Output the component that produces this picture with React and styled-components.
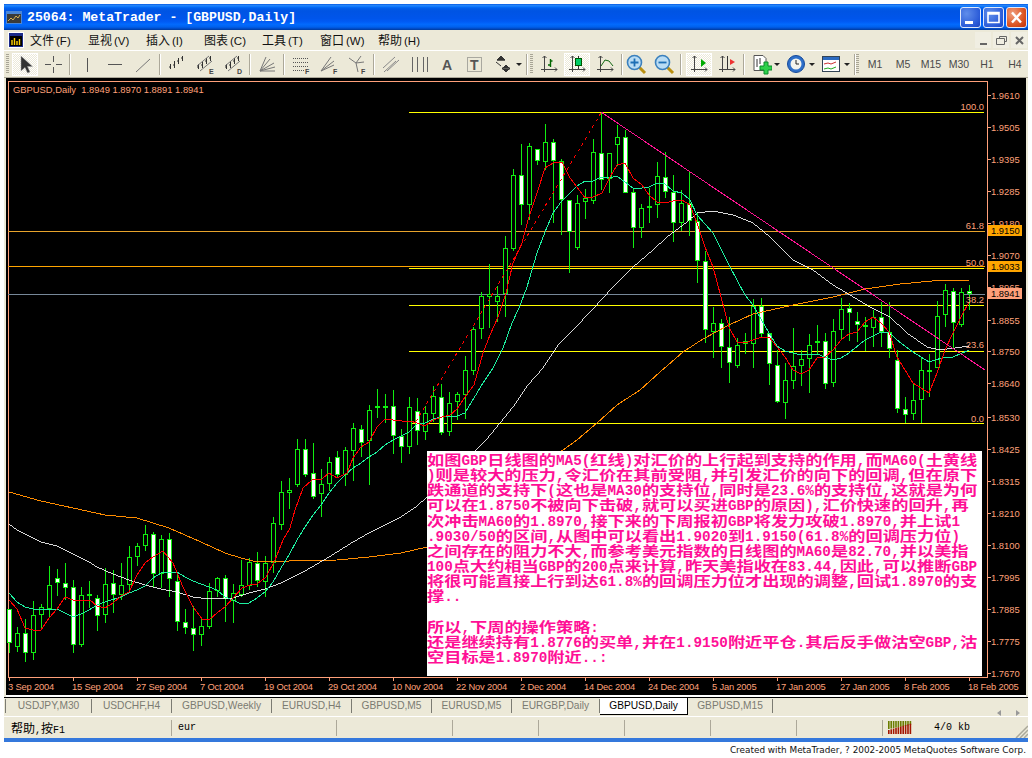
import styled, { createGlobalStyle } from "styled-components";

const GlobalStyle = createGlobalStyle`
  html, body {
    margin: 0;
    padding: 0;
    background: #fff;
    overflow: hidden;
  }
`;

/* ================= CHART DATA ================= */

// [bodyTop, bodyBottom, wickTop, wickBottom, whiteFill] - one every 8px from x=9.5
const CANDLES = [
  [609,643,609,653,1],[633,647,627,652,0],[633,653,619,662,1],[615,653,601,660,0],[607,615,604,630,0],
  [585,609,566,618,0],[578,583,569,596,1],[583,588,563,600,1],[587,645,580,653,1],[595,645,587,647,0],
  [594,595,581,608,0],[598,616,595,631,1],[584,615,568,623,0],[583,595,570,613,1],[585,595,563,600,0],
  [557,585,546,593,0],[546,557,543,566,0],[534,546,525,551,0],[534,574,532,587,1],[539,574,535,588,0],
  [539,579,533,597,1],[581,622,572,631,1],[622,628,609,634,1],[628,635,606,651,1],[626,635,618,646,0],
  [591,627,583,629,0],[578,591,577,597,0],[578,599,575,622,1],[593,601,584,623,0],[585,595,560,597,0],
  [562,586,558,590,0],[563,581,552,587,1],[563,582,556,597,0],[523,563,517,573,0],[492,525,481,530,0],
  [490,493,478,509,0],[449,485,439,487,0],[449,475,439,477,1],[473,497,443,499,1],[484,494,469,517,0],
  [462,484,457,491,0],[457,475,451,477,1],[450,475,447,486,0],[428,451,423,481,0],[429,443,425,457,1],
  [410,441,405,485,0],[406,407,389,418,0],[406,407,394,423,0],[406,436,390,454,1],[436,447,429,463,1],
  [407,447,397,454,0],[411,431,398,445,1],[413,432,406,440,0],[396,414,386,422,0],[397,433,384,435,1],
  [403,432,392,436,0],[394,402,392,420,0],[370,395,356,419,0],[329,371,327,375,0],[296,329,292,339,0],
  [294,297,264,328,0],[296,302,286,322,0],[248,294,236,317,0],[175,249,169,251,0],[175,205,144,225,1],
  [146,205,143,220,0],[149,161,149,165,1],[142,162,124,170,0],[142,161,139,223,1],[161,200,159,235,1],
  [200,232,200,273,1],[203,248,195,250,0],[198,202,189,219,0],[152,201,139,204,0],[153,180,112,190,1],
  [153,179,153,193,0],[137,145,125,166,0],[137,193,130,193,1],[192,228,188,248,1],[208,228,204,238,0],
  [206,208,188,223,0],[176,205,162,218,0],[177,192,152,198,1],[192,223,175,242,1],[203,223,190,231,0],
  [203,221,172,236,1],[221,261,212,283,1],[261,330,251,343,1],[323,332,307,358,0],[323,347,319,368,1],
  [347,363,317,383,1],[345,366,338,368,0],[341,344,333,354,0],[306,344,299,368,0],[306,334,298,338,1],
  [333,364,333,385,1],[365,402,350,403,1],[380,403,363,419,0],[366,381,328,389,0],[359,366,350,386,0],
  [345,359,334,393,0],[341,342,325,355,0],[341,384,333,389,1],[331,383,319,387,0],[309,330,298,339,0],
  [308,313,303,341,1],[321,325,312,342,1],[325,326,317,351,0],[317,328,310,347,0],[317,332,302,347,1],
  [332,349,302,358,1],[360,409,350,413,1],[409,415,397,423,1],[400,414,383,420,0],[370,400,357,423,0],
  [370,371,354,397,0],[316,368,301,368,0],[290,315,284,327,0],[291,323,288,348,1],[292,325,288,327,0],
  [291,294,285,310,1],
];

const MA_RED = "9,600 17,609 25,628 33,630 41,630 49,618 57,609 65,597 73,600 81,601 90,600 97,606 105,608 113,603 121,596 129,592 137,575 145,563 153,557 163,551 173,563 183,587 193,607 202,619 209,620 217,613 225,607 233,598 242,588 250,585 257,584 266,577 275,560 283,540 290,528 295,510 303,488 312,480 322,479 329,473 337,478 347,473 353,458 361,447 369,442 377,427 385,419 393,420 402,421 410,421 417,423 425,426 433,420 442,417 450,415 457,409 465,397 474,385 483,353 490,335 498,317 506,293 513,263 522,243 528,220 537,193 545,168 553,163 562,162 570,178 577,187 585,198 593,197 602,193 610,177 617,165 625,163 633,178 642,185 649,195 657,202 665,203 673,201 682,200 690,205 697,223 705,247 713,267 729,327 737,342 745,343 753,340 762,337 769,337 777,347 785,357 793,370 801,374 809,370 817,358 825,357 833,350 841,340 849,334 857,332 865,322 873,317 881,323 889,332 897,357 905,370 913,383 921,388 929,393 937,373 945,350 953,333 961,317 969,302";
const MA_TEAL = "9,593 17,602 25,607 33,609 41,610 57,609 65,613 73,617 81,614 89,610 97,605 105,602 121,597 129,593 137,590 145,586 153,578 161,573 177,572 185,577 193,581 201,584 209,587 217,590 225,597 233,600 241,604 249,603 257,598 265,592 273,582 281,568 289,555 297,540 305,527 313,515 321,505 329,493 337,483 345,475 353,468 361,463 369,457 377,452 385,445 393,440 401,436 409,432 417,424 425,423 433,419 442,417 457,416 465,413 474,398 483,383 493,368 503,348 512,323 519,308 527,287 537,253 545,232 553,213 561,202 570,193 577,186 585,181 593,181 601,177 609,178 617,176 625,182 633,188 642,188 649,187 657,183 665,184 673,191 682,193 690,200 697,215 713,233 729,265 745,295 753,305 769,333 777,346 785,351 801,355 817,354 833,360 841,358 849,353 865,340 881,332 889,332 897,340 913,352 929,362 945,357 953,357 969,350";
const MA_WHITE = "9,524 17,530 25,534 41,542 57,546 73,554 89,562 97,567 113,574 129,580 145,585 161,589 177,592 193,597 201,598 233,598 249,593 265,589 281,583 305,571 329,557 353,542 369,533 385,525 401,517 417,506 427,497 486,440 500,423 513,407 528,385 543,368 558,345 573,330 592,310 613,287 633,267 653,250 667,237 687,222 697,213 713,211 733,215 753,223 770,237 793,260 813,270 833,285 850,295 870,307 890,317 907,333 927,347 940,350 969,346";
const MA_ORANGE = "9,492 41,501 73,508 105,515 137,518 169,528 201,542 225,553 241,558 257,562 289,561 337,560 369,557 401,553 427,547 577,440 597,423 617,405 640,390 660,372 683,352 703,339 729,325 753,314 793,305 833,297 865,289 900,284 943,280 969,280";

const PRICES = [
  ["1.9610",95],["1.9505",127],["1.9395",159],["1.9285",191],["1.9180",223],["1.9070",255],
  ["1.8965",287],["1.8855",320],["1.8750",351],["1.8640",383],["1.8530",417],["1.8425",449],
  ["1.8315",481],["1.8210",513],["1.8100",545],["1.7995",577],["1.7885",609],["1.7775",641],["1.7670",673],
];

const DATES = [
  "3 Sep 2004","15 Sep 2004","27 Sep 2004","7 Oct 2004","19 Oct 2004","29 Oct 2004","10 Nov 2004","22 Nov 2004",
  "2 Dec 2004","14 Dec 2004","24 Dec 2004","5 Jan 2005","17 Jan 2005","27 Jan 2005","8 Feb 2005","18 Feb 2005",
];

const FIBO = [["100.0",110],["61.8",229],["50.0",266],["38.2",303],["23.6",348],["0.0",422]];

const NOTE = [
  "如图GBP日线图的MA5(红线)对汇价的上行起到支持的作用,而MA60(土黄线",
  ")则是较大的压力,令汇价在其前受阻,并引发汇价的向下的回调,但在原下",
  "跌通道的支持下(这也是MA30的支持位,同时是23.6%的支持位,这就是为何",
  "可以在1.8750不被向下击破,就可以买进GBP的原因),汇价快速的回升,再",
  "次冲击MA60的1.8970,接下来的下周报初GBP将发力攻破1.8970,并上试1",
  ".9030/50的区间,从图中可以看出1.9020到1.9150(61.8%的回调压力位)",
  "之间存在的阻力不大,而参考美元指数的日线图的MA60是82.70,并以美指",
  "100点大约相当GBP的200点来计算,昨天美指收在83.44,因此,可以推断GBP",
  "将很可能直接上行到达61.8%的回调压力位才出现的调整,回试1.8970的支",
  "撑..",
  "\u00a0",
  "所以,下周的操作策略:",
  "还是继续持有1.8776的买单,并在1.9150附近平仓.其后反手做沽空GBP,沽",
  "空目标是1.8970附近..:",
];

const MENU = [["文件","F"],["显视","V"],["插入","I"],["图表","C"],["工具","T"],["窗口","W"],["帮助","H"]];

const TABS = [
  ["USDJPY,M30",87],["USDCHF,H4",80],["GBPUSD,Weekly",100],["EURUSD,H4",80],["GBPUSD,M5",80],
  ["EURUSD,M5",80],["EURGBP,Daily",88],["GBPUSD,Daily",88,true],["GBPUSD,M15",85],
];

/* ================= TOOLBAR ICONS ================= */

const IconLetter = styled.text`
  font: bold 7px "Liberation Sans", sans-serif;
  fill: #444;
`;

const IconBig = styled.text`
  font: bold 14px "Liberation Sans", sans-serif;
  fill: #555;
`;

const Line = ({ d, c = "#555", w = 1 }) => <path d={d} fill="none" stroke={c} strokeWidth={w} />;
const Small = ({ children, x = 14 }) => (
  <IconLetter x={x} y={20}>{children}</IconLetter>
);
const Axis = () => <Line d="M5.5 2v16M2 15.5h16M3.5 4L5.5 2L7.5 4M16 13.5l2 2l-2 2" c="#444" />;
const Ticks = "M3.5 15v-5M2 13h2M7.5 14V7M6 11h2M11.5 10V4M10 7h2M15.5 7V2M14 4h2";

const ICONS = {
  arrow: <path d="M6 2v15l4-3.5l2.5 5.5l2.5-1l-2.5-5.5h5z" fill="#333" stroke="#aaa" strokeWidth=".5" />,
  cross: <Line d="M2 10.5h6M13 10.5h6M10.5 2v6M10.5 13v6" />,
  vline: <Line d="M10.5 4v14" />,
  hline: <Line d="M3 10.5h14" />,
  diag: <Line d="M3 18L17 5" c="#777" />,
  channel: <Line d={Ticks} c="#333" />,
  chanE: <g><Line d={Ticks} c="#333" /><Line d="M2 12L14 2M5 17L17 7" c="#777" /><Small>E</Small></g>,
  chanD: <g><Line d={Ticks} c="#333" /><Line d="M2 12L14 2M5 17L17 7" c="#777" /><Small>D</Small></g>,
  fan: <Line d="M3 17L9 3M3 17L13 5M3 17L17 9M3 17L18 13M3 17L18 17" c="#777" />,
  fibLines: (
    <g>
      <path d="M2 4.5h15M2 8.5h15M2 12.5h15M2 16.5h11" stroke="#555" strokeDasharray="1 1" />
      <Small>F</Small>
    </g>
  ),
  fibFan: <g><Line d="M2 17L12 3M2 17L15 7M2 17L15 11" c="#777" /><Small>F</Small></g>,
  fork: <g><Line d="M2 4L9 9M14 2L9 9M9 9L11 18M9 9L17 8" c="#777" /><Small>F</Small></g>,
  parallel: <Line d="M2 14L14 3M6 17L18 6M3 18L15 7" c="#888" />,
  vlines: <Line d="M3.5 3v15M8.5 3v15M14.5 3v15M18.5 3v15" c="#666" />,
  letterA: <IconBig x={5} y={16}>A</IconBig>,
  letterT: (
    <g>
      <rect x="2.5" y="3.5" width="14" height="14" fill="none" stroke="#666" strokeDasharray="1 1" />
      <IconBig x={5} y={16}>T</IconBig>
    </g>
  ),
  arrows: <path d="M4 6l4-4l4 4zM4 6h8M9 15l4-4l4 4zM9 14l4 4l4-4zM3 8l5 4" fill="#333" stroke="#333" />,
  bars: <g><Axis /><Line d="M11.5 5v8M9 11h3M11.5 7h2" c="#060" w={1.4} /></g>,
  candle: (
    <g>
      <Axis />
      <Line d="M11.5 2v13" c="#333" />
      <rect x="8.5" y="4.5" width="6" height="7" fill="#0c6" stroke="#050" />
    </g>
  ),
  curve: <g><Axis /><Line d="M6 12L10 6L14 7L18 12" c="#161" /></g>,
  zoomIn: (
    <g>
      <path d="M13 13l6 6" stroke="#b98f10" strokeWidth="3" />
      <circle cx="8.5" cy="8.5" r="7" fill="#b9dcf4" stroke="#3b80bd" strokeWidth="1.6" />
      <path d="M4.5 8.5h8M8.5 4.5v8" stroke="#1e6fb5" strokeWidth="1.8" />
    </g>
  ),
  zoomOut: (
    <g>
      <path d="M13 13l6 6" stroke="#b98f10" strokeWidth="3" />
      <circle cx="8.5" cy="8.5" r="7" fill="#b9dcf4" stroke="#3b80bd" strokeWidth="1.6" />
      <path d="M4.5 8.5h8" stroke="#1e6fb5" strokeWidth="1.8" />
    </g>
  ),
  autoScroll: <g><Axis /><path d="M12 5l5 4l-5 4z" fill="#0a0" /></g>,
  shift: <g><Axis /><path d="M10.5 2v13" stroke="#333" /><path d="M18 8l-5-3v6z" fill="#e33" /></g>,
  newChart: (
    <g>
      <path d="M3 1.5h9l3 3v12H3z" fill="#fff" stroke="#555" />
      <Line d="M6 5v8M9 4v6" c="#333" />
      <path d="M13 8v4h-4v4h4v4h4v-4h4v-4h-4V8z" fill="#2dd14a" stroke="#0a8a2c" />
    </g>
  ),
  clock: (
    <g>
      <circle cx="10" cy="10" r="8.5" fill="#2e6fc9" stroke="#164a9a" />
      <circle cx="10" cy="10" r="5.5" fill="#f4f4ee" />
      <Line d="M10 6v4h3" c="#222" />
    </g>
  ),
  template: (
    <g>
      <rect x="1.5" y="2.5" width="17" height="15" fill="#fff" stroke="#345" />
      <rect x="2" y="3" width="16" height="3" fill="#2c6ac0" />
      <Line d="M3 10l4-1l3 1l5-2" c="#c33" />
      <Line d="M3 15l4-1l3 1l5-2" c="#2a2" />
    </g>
  ),
};

// "*" pressed, "+" has a drop arrow, "|n" separator with n px extra room
const TOOLS_A = [
  "arrow*","cross","|","vline","hline","diag","|","channel","chanE","chanD","|","fan","|",
  "fibLines","fibFan","fork","|","parallel","vlines","letterA","letterT","arrows+",
];
const TOOLS_B = [
  "bars","candle*","curve","|-3","zoomIn","zoomOut","|1","autoScroll*","shift","|","newChart+","clock+","template+",
];

function ToolGroup({ items }) {
  return items.map((item, i) => {
    if (item[0] === "|") return <Sep key={i} $x={parseInt(item.slice(1), 10) || 0} />;
    const name = item.replace(/[*+]/, "");
    const drop = item.endsWith("+");
    return (
      <ToolButton key={i} $on={item.endsWith("*")} $drop={drop}>
        <svg width="21" height="21" viewBox="0 0 21 21">{ICONS[name]}</svg>
        {drop && <Caret />}
      </ToolButton>
    );
  });
}

/* ================= CHART ================= */

function Chart() {
  return (
    <ChartSvg viewBox="6 78 1020 617" width="1020" height="617" shapeRendering="crispEdges">
      <path d="M8.5 677V81.5H987.5V677M8 677.5H988" fill="none" stroke="#ffa07a" />

      {/* fibo and level lines */}
      <Level x1={8} x2={985} y={231} c="#e8a42c" />
      <Level x1={8} x2={985} y={266} c="#ffa500" />
      <Level x1={8} x2={985} y={294} c="#778899" />
      {[112, 268, 305, 351, 423].map((y) => (
        <Level key={y} x1={409} x2={984} y={y} c="#ffff00" />
      ))}

      {CANDLES.map(([top, bottom, hi, lo, white], i) => {
        const x = 9.5 + 8 * i;
        return (
          <g key={i}>
            <line x1={x} x2={x} y1={hi} y2={lo} stroke="#10ee10" />
            {bottom - top < 2 ? (
              <rect x={x - 2.5} y={top} width="5" height="2" fill="#10ee10" />
            ) : (
              <rect x={x - 2} y={top + 0.5} width="4" height={bottom - top - 1} fill={white ? "#fff" : "#000"} stroke="#10ee10" />
            )}
          </g>
        );
      })}

      <polyline points={MA_ORANGE} fill="none" stroke="#ff8c00" />
      <polyline points={MA_WHITE} fill="none" stroke="#fff" strokeWidth=".85" />
      <polyline points={MA_TEAL} fill="none" stroke="#1ef0a0" />
      <polyline points={MA_RED} fill="none" stroke="#ff0000" />
      <line x1="601" y1="112" x2="985" y2="370" stroke="#ff1493" />
      <line x1="601" y1="113" x2="415" y2="423" stroke="#ff0000" strokeDasharray="3 4" />

      <AxisText x={13} y={93}>GBPUSD,Daily&nbsp;&nbsp;1.8949 1.8970 1.8891 1.8941</AxisText>

      {FIBO.map(([label, y]) => (
        <AxisText key={label} x={984} y={y} textAnchor="end">{label}</AxisText>
      ))}

      {PRICES.map(([label, y]) => (
        <g key={label}>
          <line x1="988" x2="991" y1={y + 0.5} y2={y + 0.5} stroke="#ffa07a" />
          <AxisText x={991} y={y + 4}>{label}</AxisText>
        </g>
      ))}

      {DATES.map((label, i) => {
        const x = 9.5 + 64 * i;
        return (
          <g key={label}>
            <line x1={x} x2={x} y1="677" y2="681" stroke="#ffa07a" />
            <AxisText x={x - 1.5} y={690} $tight>{label}</AxisText>
          </g>
        );
      })}

      <PriceTag y={225} fill="#ffa500" label="1.9150" />
      <PriceTag y={261} fill="#ffa500" label="1.9033" />
      <PriceTag y={288} fill="#ffa07a" label="1.8941" />
    </ChartSvg>
  );
}

function Level({ x1, x2, y, c }) {
  return <line x1={x1} x2={x2} y1={y + 0.5} y2={y + 0.5} stroke={c} />;
}

function PriceTag({ y, fill, label }) {
  return (
    <g>
      <rect x="988" y={y} width="34" height="11" fill={fill} />
      <AxisText x={991} y={y + 9} $dark>{label}</AxisText>
    </g>
  );
}

function NoteLine({ text }) {
  // latin runs use a half-width mono face, the rest is the CJK face
  return (
    <NoteRow>
      {text.split(/([\x00-\x7f]+)/).map((part, i) =>
        /^[\x00-\x7f]+$/.test(part) ? <Latin key={i}>{part}</Latin> : part
      )}
    </NoteRow>
  );
}

/* ================= APP ================= */

export default function App() {
  return (
    <>
      <GlobalStyle />
      <Window>
        <TitleBar>
          <TitleIcon viewBox="0 0 16 13">
            <rect width="16" height="13" fill="#4c86d6" />
            <rect x="1" y="3" width="14" height="9" fill="#3a3a3a" />
            <path d="M2 10l3-3l2 2l3-4l2 2l2-3" fill="none" stroke="#d8b050" />
          </TitleIcon>
          <TitleText>25064: MetaTrader - [GBPUSD,Daily]</TitleText>
          <WinButtons>
            <WinButton>
              <svg width="21" height="21"><rect x="5" y="14" width="8" height="3" fill="#fff" /></svg>
            </WinButton>
            <WinButton>
              <svg width="21" height="21"><path d="M5 5.5h11v10H5zM5 7h11" fill="none" stroke="#fff" strokeWidth="1.6" /></svg>
            </WinButton>
            <WinButton $close>
              <svg width="21" height="21"><path d="M6 5.5l9 10M15 5.5l-9 10" stroke="#fff" strokeWidth="2.4" /></svg>
            </WinButton>
          </WinButtons>
        </TitleBar>

        <MenuBar>
          <MenuLogo>
            <svg width="14" height="14" viewBox="0 0 14 14">
              <rect width="14" height="14" fill="#1a2a8a" />
              <rect x="1" y="3" width="12" height="10" fill="#000" />
              <path d="M3 12V7M5.5 12V5M8 12V8M10.5 12V6" stroke="#ffd000" strokeWidth="1.4" />
            </svg>
          </MenuLogo>
          {MENU.map(([label, key]) => (
            <MenuItem key={key}>{label}<MenuKey>({key})</MenuKey></MenuItem>
          ))}
          <MdiButtons>
            <MdiButton><svg width="11" height="11"><rect x="2" y="8" width="7" height="2" fill="#666" /></svg></MdiButton>
            <MdiButton><svg width="11" height="11"><path d="M3.5 3.5v-2h7v5h-2M.5 3.5h8v6h-8z" fill="none" stroke="#666" /></svg></MdiButton>
            <MdiButton><svg width="11" height="11"><path d="M2 2l7 7M9 2l-7 7" stroke="#666" strokeWidth="2" /></svg></MdiButton>
          </MdiButtons>
        </MenuBar>

        <Toolbar>
          <Grip />
          <ToolGroup items={TOOLS_A} />
          <Sep />
          <Grip />
          <ToolGroup items={TOOLS_B} />
          <Sep $x={-2} />
          <Grip />
          {["M1", "M5", "M15", "M30", "H1", "H4"].map((p) => (
            <PeriodButton key={p}>{p}</PeriodButton>
          ))}
        </Toolbar>

        <ChartPane>
          <Chart />
          <NoteBox>
            {NOTE.map((text, i) => <NoteLine key={i} text={text} />)}
          </NoteBox>
        </ChartPane>

        <TabStrip>
          {TABS.map(([label, width, active]) => (
            <Tab key={label} $w={width} $active={active}>{label}</Tab>
          ))}
          <TabArrows>
            <svg width="30" height="12">
              <path d="M7 3v6l-4-3zM22 3v6l4-3z" fill="#999" />
            </svg>
          </TabArrows>
        </TabStrip>

        <StatusBar>
          <StatusCell $w={167}><StatusCjk>帮助</StatusCjk>,<StatusCjk>按</StatusCjk>F1</StatusCell>
          <StatusCell $w={165}>eur</StatusCell>
          <StatusCell $w={116} />
          <StatusCell $w={86} />
          <StatusCell $w={86} />
          <StatusCell $w={86} />
          <StatusCell $w={86} />
          <StatusCell $w={86} />
          <ConnectCell>
            <svg width="24" height="13" viewBox="0 0 24 13">
              {Array.from({ length: 10 }, (_, i) => (
                <g key={i}>
                  <rect x={i * 2.4} y="0" width="1.6" height={8 - i * 0.45} fill="#6b7d00" />
                  <rect x={i * 2.4} y={9 - i * 0.7} width="1.6" height={4 + i * 0.7} fill="#a31500" />
                </g>
              ))}
            </svg>
            <Traffic>4/0 kb</Traffic>
          </ConnectCell>
          <SizeGrip viewBox="0 0 14 14">
            <path d="M14 2L2 14M14 6L6 14M14 10L10 14" stroke="#aaa89a" strokeWidth="1.5" />
          </SizeGrip>
        </StatusBar>
        <BottomEdge />
      </Window>
      <Footer>Created with MetaTrader, ? 2002-2005 MetaQuotes Software Corp.</Footer>
    </>
  );
}

/* ================= STYLED COMPONENTS ================= */

const Window = styled.div`
  margin: 4px 4px 0;
  width: 1024px;
  background: #ece9d8;
  font-family: "Noto Sans CJK SC", "Liberation Sans", sans-serif;
`;

const TitleBar = styled.div`
  height: 26px;
  display: flex;
  align-items: center;
  padding: 0 1px 0 2px;
  background: linear-gradient(
    #0058e6 0%, #2a85f5 5%, #127dff 9%, #0262ee 15%, #0054e3 26%,
    #0055eb 56%, #005bf5 68%, #026afe 78%, #0062ef 87%, #0052d6 93%, #0040ab 97%
  );
`;

const TitleIcon = styled.svg`
  width: 16px;
  height: 13px;
  flex: none;
`;

const TitleText = styled.div`
  margin-left: 5px;
  color: #fff;
  font: bold 13.2px "Liberation Mono", monospace;
  white-space: nowrap;
`;

const WinButtons = styled.div`
  margin-left: auto;
  display: flex;
  gap: 2px;
`;

const WinButton = styled.div`
  width: 21px;
  height: 21px;
  box-sizing: border-box;
  border: 1px solid #dfe8fb;
  border-radius: 3px;
  overflow: hidden;
  background: ${(p) =>
    p.$close
      ? "radial-gradient(circle at 30% 30%, #f0a080, #dd5522 60%, #c03008)"
      : "radial-gradient(circle at 30% 30%, #5f8dea, #2a5bd8 70%, #1d45c0)"};
  svg {
    display: block;
    margin: -1px;
  }
`;

const MenuBar = styled.div`
  height: 20px;
  display: flex;
  align-items: center;
  padding-left: 4px;
  border-bottom: 1px solid #fff;
  box-sizing: content-box;
`;

const MenuLogo = styled.div`
  width: 16px;
  height: 16px;
  margin-right: 6px;
  background: #fff;
  display: flex;
  align-items: center;
  justify-content: center;
`;

const MenuItem = styled.div`
  width: 58px;
  flex: none;
  font-size: 12px;
  line-height: 20px;
  color: #111;
  white-space: nowrap;
`;

const MenuKey = styled.span`
  font: 11.5px "Liberation Sans", sans-serif;
  margin-left: 2px;
`;

const MdiButtons = styled.div`
  margin-left: auto;
  margin-right: 1px;
  display: flex;
  gap: 2px;
`;

const MdiButton = styled.div`
  width: 16px;
  height: 16px;
  background: #f0eee2;
  display: flex;
  align-items: center;
  justify-content: center;
`;

const Toolbar = styled.div`
  height: 26px;
  display: flex;
  align-items: center;
  padding-left: 2px;
  border-bottom: 1px solid #aca899;
`;

const Grip = styled.div`
  width: 3px;
  height: 20px;
  margin-right: 2px;
  flex: none;
  background: repeating-linear-gradient(#a8a596 0 1px, #ece9d8 1px 2px);
`;

const Sep = styled.div`
  width: 1px;
  height: 21px;
  margin: 0 ${(p) => 2 + (p.$x || 0)}px 0 2px;
  flex: none;
  background: #aca899;
  border-right: 1px solid #fff;
`;

const ToolButton = styled.div`
  width: ${(p) => (p.$drop ? "33px" : "26px")};
  height: 23px;
  margin: 0 1px;
  flex: none;
  box-sizing: border-box;
  display: flex;
  align-items: center;
  padding-left: 2px;
  border: 1px solid ${(p) => (p.$on ? "#fff" : "transparent")};
  background: ${(p) =>
    p.$on ? "repeating-conic-gradient(#fff 0 25%, #ece9d8 0 50%) 0 0 / 2px 2px" : "transparent"};
  svg {
    flex: none;
  }
`;

const Caret = styled.span`
  margin-left: 2px;
  width: 0;
  height: 0;
  border-left: 3px solid transparent;
  border-right: 3px solid transparent;
  border-top: 3px solid #222;
`;

const PeriodButton = styled.div`
  width: 28px;
  flex: none;
  text-align: center;
  font: 10.5px "Liberation Sans", sans-serif;
  color: #4a4a4a;
`;

const ChartPane = styled.div`
  position: relative;
  height: 617px;
  margin: 0 2px;
  background: #000;
  border-bottom: 2px solid #fff;
`;

const ChartSvg = styled.svg`
  display: block;
`;

const AxisText = styled.text`
  font: 9.4px "Liberation Sans", sans-serif;
  letter-spacing: ${(p) => (p.$tight ? "-0.2px" : "0")};
  fill: ${(p) => (p.$dark ? "#000" : "#ffa07a")};
  shape-rendering: auto;
`;

const NoteBox = styled.div`
  position: absolute;
  left: 421px;
  top: 373px;
  width: 555px;
  height: 225px;
  box-sizing: border-box;
  background: #fff;
  color: #ff0f96;
  font: bold 17.2px "Noto Sans CJK SC", sans-serif;
`;

const NoteRow = styled.div`
  height: 15.15px;
  line-height: 15.15px;
  white-space: nowrap;
  transform: scaleY(0.82);
`;

const Latin = styled.span`
  display: inline-block;
  font: bold 14.33px / 15.15px "Liberation Mono", monospace;
  transform: scaleY(1.2);
`;

const TabStrip = styled.div`
  height: 20px;
  display: flex;
  align-items: flex-start;
  padding-left: 1px;
  border-top: 1px solid #000;
  border-bottom: 1px solid #fff;
  box-sizing: border-box;
`;

const Tab = styled.div`
  width: ${(p) => p.$w}px;
  height: ${(p) => (p.$active ? "17px" : "14px")};
  margin-top: ${(p) => (p.$active ? "0" : "1px")};
  flex: none;
  box-sizing: border-box;
  text-align: center;
  font: 10.2px / ${(p) => (p.$active ? "16px" : "14px")} "Liberation Sans", sans-serif;
  color: ${(p) => (p.$active ? "#000" : "#7b7b72")};
  background: ${(p) => (p.$active ? "#fff" : "transparent")};
  border-right: 1px solid ${(p) => (p.$active ? "#000" : "#7b7b72")};
  border-bottom: ${(p) => (p.$active ? "1px solid #000" : "none")};
  &:first-child {
    border-left: 1px solid #7b7b72;
  }
`;

const TabArrows = styled.div`
  margin-left: auto;
  margin-top: 2px;
  margin-right: 4px;
`;

const StatusBar = styled.div`
  height: 21px;
  padding-left: 1px;
  display: flex;
  align-items: center;
  position: relative;
`;

const StatusCell = styled.div`
  width: ${(p) => p.$w}px;
  height: 16px;
  flex: none;
  box-sizing: border-box;
  padding-left: 6px;
  border-right: 1px solid #aca899;
  font: 10px / 16px "Liberation Mono", monospace;
  color: #000;
`;

const StatusCjk = styled.span`
  font: 12px / 16px "Noto Sans CJK SC", sans-serif;
`;

const ConnectCell = styled.div`
  flex: 1;
  display: flex;
  align-items: center;
  padding-left: 5px;
`;

const Traffic = styled.span`
  margin-left: 22px;
  font: 10px "Liberation Mono", monospace;
`;

const SizeGrip = styled.svg`
  position: absolute;
  right: 0;
  bottom: 0;
  width: 14px;
  height: 14px;
`;

const BottomEdge = styled.div`
  height: 4px;
  background: #3478dc;
`;

const Footer = styled.div`
  margin-right: 6px;
  margin-top: 1px;
  text-align: right;
  font: 8.9px / 14px "DejaVu Sans", sans-serif;
  color: #111;
`;
